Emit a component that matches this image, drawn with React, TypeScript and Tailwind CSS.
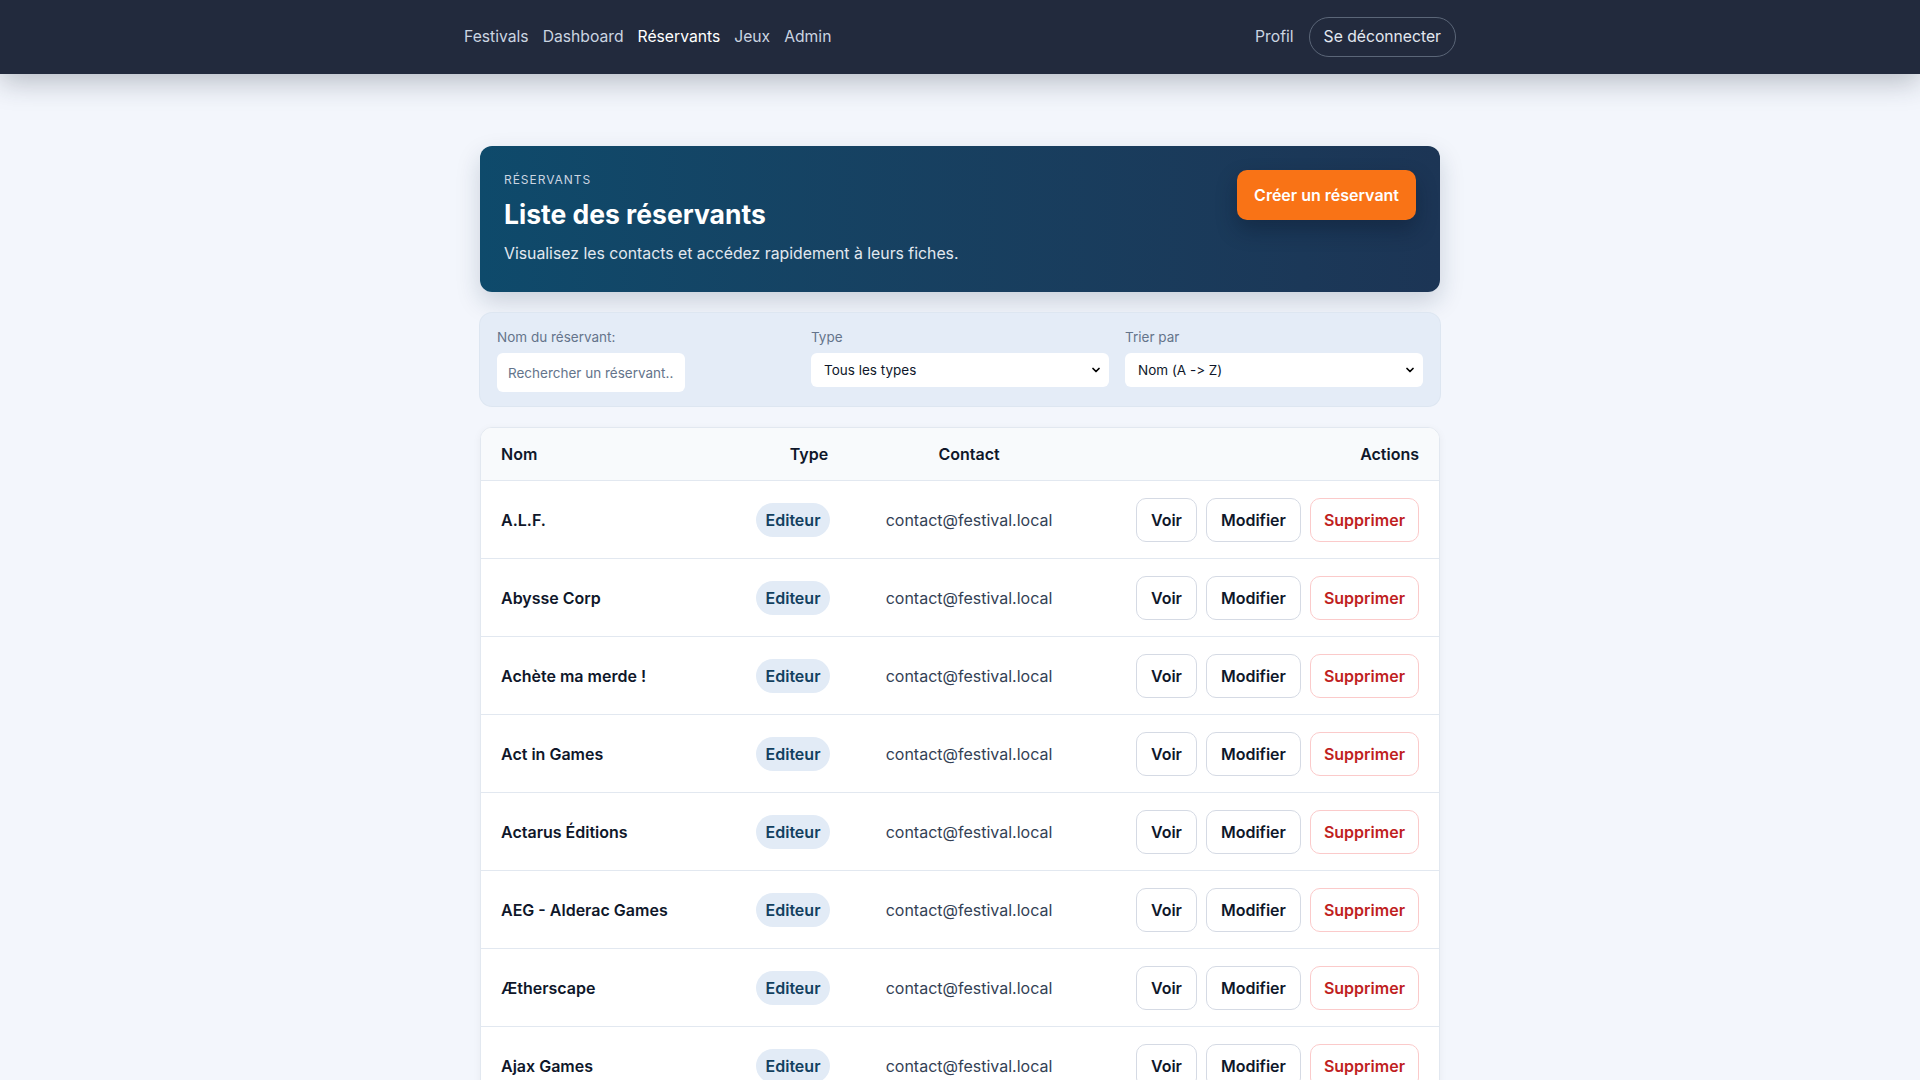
import { ChevronDown } from 'lucide-react'

const NAV_LINKS = [
  { label: 'Festivals', active: false },
  { label: 'Dashboard', active: false },
  { label: 'Réservants', active: true },
  { label: 'Jeux', active: false },
  { label: 'Admin', active: false },
]

const RESERVANTS = [
  'A.L.F.',
  'Abysse Corp',
  'Achète ma merde !',
  'Act in Games',
  'Actarus Éditions',
  'AEG - Alderac Games',
  'Ætherscape',
  'Ajax Games',
  'Alkarion',
  'Ankama',
]

function NavBar() {
  return (
    <header className="relative z-10 h-[74px] bg-[#222a3d] shadow-[0_8px_28px_rgba(30,41,59,0.28)]">
      <div className="mx-auto flex h-full max-w-[992px] items-center justify-between">
        <nav className="flex items-center gap-[14px] text-[15.7px]">
          {NAV_LINKS.map((link) => (
            <a
              key={link.label}
              href="#"
              className={link.active ? 'text-white' : 'text-[#cbd5e1] hover:text-white'}
            >
              {link.label}
            </a>
          ))}
        </nav>
        <div className="flex items-center gap-[15px] text-[15.7px]">
          <a href="#" className="text-[#cbd5e1]">
            Profil
          </a>
          <button className="h-10 rounded-full border border-[#5b6678] px-[14px] text-[#e2e8f0]">
            Se déconnecter
          </button>
        </div>
      </div>
    </header>
  )
}

function PageHeader() {
  return (
    <section className="flex items-start justify-between rounded-xl bg-gradient-to-r from-[#0e4a6b] to-[#1c3555] px-6 pt-[26px] pb-[26px] shadow-[0_10px_24px_rgba(15,42,74,0.18)]">
      <div>
        <p className="text-xs leading-4 uppercase tracking-[0.08em] text-[#cbd5e1]">Réservants</p>
        <h1 className="mt-2 text-[26.5px] leading-9 font-bold text-white">Liste des réservants</h1>
        <p className="mt-[10px] text-[15.8px] leading-6 text-[#e2e8f0]">
          Visualisez les contacts et accédez rapidement à leurs fiches.
        </p>
      </div>
      <button className="-mt-[2px] h-[50px] rounded-[10px] bg-[#f97316] px-[17px] text-base font-semibold text-white shadow-[0_10px_20px_rgba(10,20,40,0.35)]">
        Créer un réservant
      </button>
    </section>
  )
}

function SelectField({ label, value, options }: { label: string; value: string; options: string[] }) {
  return (
    <div>
      <label className="block text-[13.5px] leading-[18px] text-[#64748b]">{label}</label>
      <div className="relative mt-[7px]">
        <select
          defaultValue={value}
          className="h-[34px] w-full appearance-none rounded-md bg-white pl-[13px] pr-8 text-[13.5px] text-[#0f172a] outline-none [font-feature-settings:'calt'_0]"
        >
          {options.map((o) => (
            <option key={o}>{o}</option>
          ))}
        </select>
        <ChevronDown
          className="pointer-events-none absolute right-[7px] top-1/2 h-3 w-3 -translate-y-1/2 text-black"
          strokeWidth={3.5}
        />
      </div>
    </div>
  )
}

function Filters() {
  return (
    <section className="mt-[21px] grid grid-cols-3 gap-4 rounded-xl bg-[#e4ecf7] px-[17px] pt-[15px] pb-[14px] shadow-[0_0_0_1px_#dde6f1]">
      <div>
        <label className="block text-[13.5px] leading-[18px] text-[#64748b]">Nom du réservant:</label>
        <input
          type="text"
          placeholder="Rechercher un réservant..."
          className="mt-[7px] h-[39px] w-[188px] rounded-md bg-white px-[11px] text-[13.5px] text-[#0f172a] outline-none placeholder:text-[#64748b]"
        />
      </div>
      <SelectField label="Type" value="Tous les types" options={['Tous les types', 'Editeur', 'Boutique', 'Association']} />
      <SelectField label="Trier par" value="Nom (A -> Z)" options={['Nom (A -> Z)', 'Nom (Z -> A)']} />
    </section>
  )
}

function ReservantsTable() {
  return (
    <section className="mt-[21px] overflow-hidden rounded-xl border border-[#e2e8f0] bg-white shadow-[0_2px_8px_rgba(15,23,42,0.05)]">
      <div className="flex h-[53px] items-center border-b border-[#e2e8f0] bg-[#f8fafc] text-base font-semibold text-[#0f172a]">
        <div className="w-[254px] pl-[20px]">Nom</div>
        <div className="w-[148px] text-center">Type</div>
        <div className="w-[172px] text-center">Contact</div>
        <div className="flex-1 pr-[20px] text-right">Actions</div>
      </div>
      {RESERVANTS.map((name) => (
        <div key={name} className="flex h-[78px] items-center border-b border-[#e2e8f0] text-base">
          <div className="w-[254px] pl-[20px] font-semibold text-[#0f172a]">{name}</div>
          <div className="flex w-[116px] justify-center">
            <span className="rounded-full bg-[#e2ebf6] px-2.5 py-[5px] font-semibold text-[#12405f]">
              Editeur
            </span>
          </div>
          <div className="w-[236px] text-center text-[#334155]">contact@festival.local</div>
          <div className="flex flex-1 justify-end gap-[9px] pr-[20px]">
            <button className="h-11 rounded-[10px] border border-[#d5dae4] px-[14px] font-semibold text-[#0f172a]">
              Voir
            </button>
            <button className="h-11 rounded-[10px] border border-[#d5dae4] px-[14px] font-semibold text-[#0f172a]">
              Modifier
            </button>
            <button className="h-11 rounded-[10px] border border-[#fbcaca] px-[13px] font-semibold text-[#c01f1f]">
              Supprimer
            </button>
          </div>
        </div>
      ))}
    </section>
  )
}

export default function App() {
  return (
    <div className="min-h-screen bg-[#f3f6fc] font-['Inter',sans-serif]">
      <NavBar />
      <main className="mx-auto w-[960px] pt-[72px] pb-16">
        <PageHeader />
        <Filters />
        <ReservantsTable />
      </main>
    </div>
  )
}
